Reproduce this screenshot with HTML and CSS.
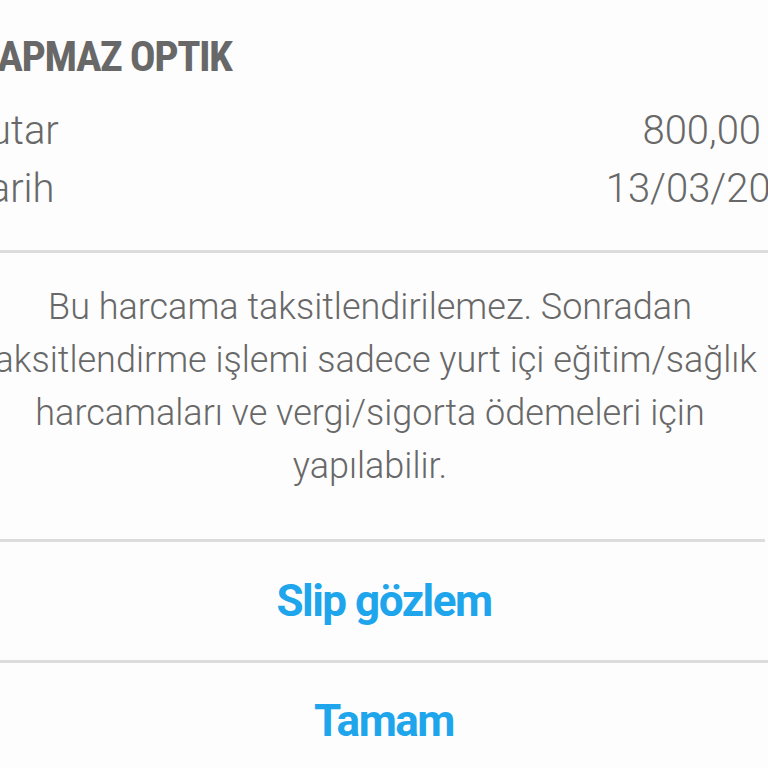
FILE: index.html
```
<!DOCTYPE html>
<html lang="tr">
<head>
    <meta charset="UTF-8">
    <meta name="viewport" content="width=device-width, initial-scale=1.0">
    <title>İşlem Detayı</title>
    <link rel="stylesheet" href="styles.css">
</head>
<body>
    <div class="dialog">
        <div class="dialog-head">
            <div class="merchant">KAPMAZ OPTIK</div>
            <div class="row">
                <span class="label">Tutar</span>
                <span class="value">800,00 TL</span>
            </div>
            <div class="row">
                <span class="label">Tarih</span>
                <span class="value">13/03/2023</span>
            </div>
        </div>

        <div class="message">
            Bu harcama taksitlendirilemez. Sonradan taksitlendirme işlemi sadece yurt içi eğitim/sağlık harcamaları ve vergi/sigorta ödemeleri için yapılabilir.
        </div>

        <button class="action">Slip gözlem</button>
        <button class="action">Tamam</button>
    </div>
</body>
</html>
```

FILE: styles.css
```
body {
    margin: 0;
    padding: 0;
    background: #fdfdfd;
    overflow: hidden;
    font-family: Roboto, 'Noto Sans', sans-serif;
    color: #686868;
}

.dialog {
    width: 840px;
    margin-left: -25px;
}

.dialog-head {
    padding: 32px 0 32px;
    border-bottom: 3px solid #dcdcdc;
}

.merchant {
    font-size: 43px;
    font-weight: 700;
    font-stretch: 80%;
    letter-spacing: -1.5px;
    line-height: 48px;
    margin-bottom: 22px;
}

.row {
    display: flex;
    justify-content: space-between;
    margin-left: -8px;
    font-size: 40px;
    font-weight: 300;
    line-height: 58px;
}

.message {
    width: 790px;
    padding: 28px 0 46px;
    text-align: center;
    font-size: 36px;
    font-weight: 300;
    line-height: 53px;
    border-bottom: 3px solid #dcdcdc;
}

.action {
    display: block;
    width: 100%;
    height: 118px;
    padding: 0 22px 0 0;
    border: none;
    background: none;
    font-family: inherit;
    font-size: 44px;
    font-weight: 700;
    letter-spacing: -1.5px;
    color: #1ea5ec;
    cursor: pointer;
}

.action + .action {
    border-top: 3px solid #dcdcdc;
}
```
